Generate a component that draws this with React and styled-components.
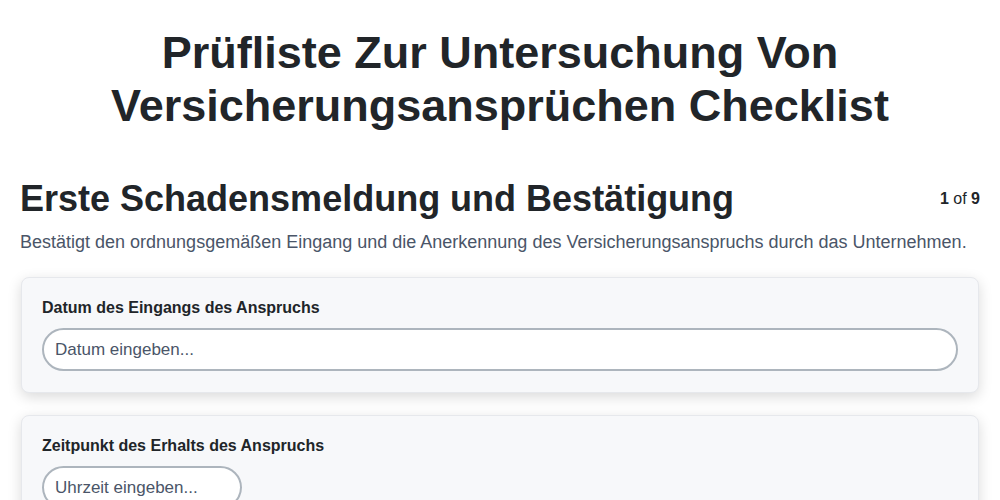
import React from 'react';
import styled, { createGlobalStyle } from 'styled-components';

const GlobalStyle = createGlobalStyle`
    * { box-sizing: border-box; }
    body {
        margin: 0;
        background: #fff;
        font-family: "Liberation Sans", Arial, sans-serif;
        color: #212529;
    }
`;

const fields = [
    { label: 'Datum des Eingangs des Anspruchs', placeholder: 'Datum eingeben...', wide: true },
    { label: 'Zeitpunkt des Erhalts des Anspruchs', placeholder: 'Uhrzeit eingeben...', wide: false },
];

export default function App() {
    return (
        <>
            <GlobalStyle />
            <Page>
                <Title>Prüfliste Zur Untersuchung Von Versicherungsansprüchen Checklist</Title>
                <SectionHeader>
                    <SectionTitle>Erste Schadensmeldung und Bestätigung</SectionTitle>
                    <Counter><b>1</b> of <b>9</b></Counter>
                </SectionHeader>
                <Description>
                    Bestätigt den ordnungsgemäßen Eingang und die Anerkennung des Versicherungsanspruchs durch das Unternehmen.
                </Description>
                <CardList>
                    {fields.map((f) => (
                        <Card key={f.label}>
                            <Label>{f.label}</Label>
                            <Input type="text" placeholder={f.placeholder} $wide={f.wide} />
                        </Card>
                    ))}
                </CardList>
            </Page>
        </>
    );
}

/* --- STYLES --- */
const Page = styled.div`
    padding: 26px 20px 20px 20px;
`;
const Title = styled.h1`
    margin: 0 auto 45px auto;
    max-width: 820px;
    font-size: 45px;
    line-height: 53px;
    font-weight: 700;
    text-align: center;
    color: #212529;
`;
const SectionHeader = styled.div`
    display: flex;
    justify-content: space-between;
    align-items: center;
`;
const SectionTitle = styled.h2`
    margin: 0;
    font-size: 36px;
    line-height: 43px;
    font-weight: 700;
    color: #212529;
`;
const Counter = styled.div`
    font-size: 16px;
    color: #212529;
    b { font-weight: 700; }
`;
const Description = styled.p`
    margin: 9px 0 21px 0;
    font-size: 18px;
    line-height: 27px;
    color: #4a5568;
`;
const CardList = styled.div`
    display: flex;
    flex-direction: column;
    gap: 22px;
`;
const Card = styled.div`
    background: #f7f8fa;
    border: 1px solid #e6e8ec;
    border-radius: 8px;
    padding: 20px 20px 21px 20px;
    margin: 0 1px;
    box-shadow: 0 4px 14px rgba(0, 0, 0, 0.15);
`;
const Label = styled.div`
    font-size: 16px;
    font-weight: 700;
    line-height: 20px;
    margin-bottom: 10px;
    color: #212529;
`;
const Input = styled.input`
    display: block;
    width: ${(p) => (p.$wide ? '100%' : '200px')};
    height: 43px;
    padding: 0 11px;
    border: 2px solid #adb5bd;
    border-radius: 22px;
    background: #fff;
    font-family: "Liberation Sans", Arial, sans-serif;
    font-size: 17px;
    color: #212529;
    outline: none;
    &::placeholder { color: #4a5568; }
`;
